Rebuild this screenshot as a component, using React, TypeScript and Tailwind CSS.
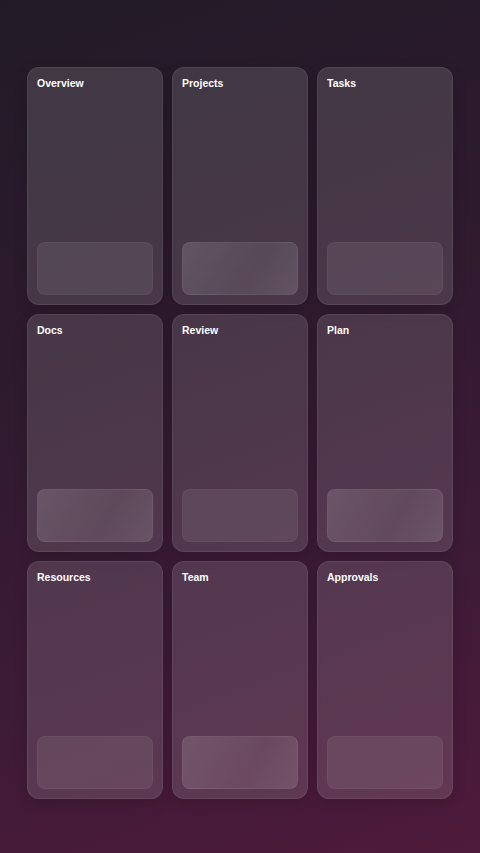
const cards = [
  { title: 'Overview', glow: false },
  { title: 'Projects', glow: true },
  { title: 'Tasks', glow: false },
  { title: 'Docs', glow: true },
  { title: 'Review', glow: false },
  { title: 'Plan', glow: true },
  { title: 'Resources', glow: false },
  { title: 'Team', glow: true },
  { title: 'Approvals', glow: false },
]

export default function App() {
  return (
    <div className="min-h-[853px] w-full bg-[linear-gradient(160deg,#221b27_0%,#2d1a2d_35%,#3d1b36_70%,#4f1a3b_100%)] px-[27px] pt-[67px] pb-[54px] font-['Liberation_Sans',Arial,sans-serif]">
      <div className="grid grid-cols-3 gap-[9px]">
        {cards.map((c) => (
          <div
            key={c.title}
            className="flex h-[238px] flex-col justify-between rounded-[12px] border border-white/[0.07] bg-white/[0.13] px-[9px] pt-[9px] pb-[9px] shadow-[0_4px_14px_rgba(0,0,0,0.15)]"
          >
            <h3 className="text-[10.5px] leading-[12px] font-bold text-white">{c.title}</h3>
            <div
              className={
                c.glow
                  ? 'h-[53px] rounded-[8px] border border-white/[0.06] bg-[linear-gradient(120deg,rgba(255,255,255,0.15),rgba(255,255,255,0.09)_60%,rgba(255,255,255,0.14))]'
                  : 'h-[53px] rounded-[8px] border border-white/[0.04] bg-white/[0.08]'
              }
            />
          </div>
        ))}
      </div>
    </div>
  )
}
